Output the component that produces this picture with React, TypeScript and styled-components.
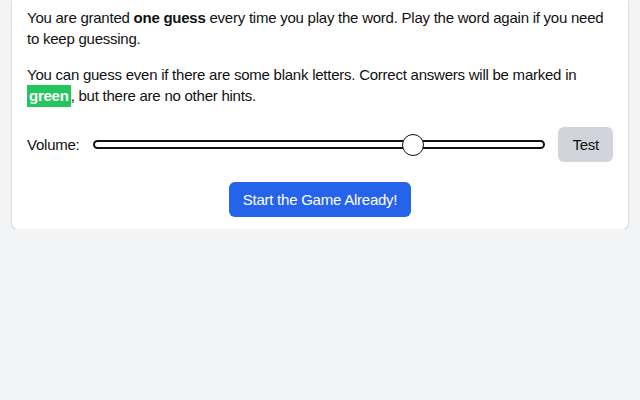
import React, { useState } from 'react';
import styled, { createGlobalStyle } from 'styled-components';

const GlobalStyle = createGlobalStyle`
  html, body {
    margin: 0;
    padding: 0;
    background: #f3f4f6;
  }
  body {
    font-family: 'Liberation Sans', Arial, sans-serif;
    font-size: 15px;
    line-height: 21px;
    letter-spacing: -0.24px;
    color: #111;
  }
`;

const Page = styled.div`
  padding: 0 12px;
`;

const Card = styled.div`
  background: #fff;
  border-radius: 0 0 6px 6px;
  box-shadow: 0 1px 3px rgba(0, 0, 0, 0.14), 0 1px 2px rgba(0, 0, 0, 0.08);
  padding: 7px 15px 12px;
`;

const Paragraph = styled.p<{ $last?: boolean }>`
  margin: 0 0 ${(p) => (p.$last ? '0' : '15px')};
`;

const Highlight = styled.span`
  background: #22c55e;
  color: #fff;
  font-weight: 600;
  padding: 2px 2px 3px;
`;

const VolumeRow = styled.div`
  display: flex;
  align-items: center;
  gap: 13px;
  margin-top: 21px;
`;

const Label = styled.label`
  flex: none;
`;

const Slider = styled.input`
  flex: 1;
  margin: 0;
  height: 24px;
  background: transparent;
  -webkit-appearance: none;
  appearance: none;

  &::-webkit-slider-runnable-track {
    height: 9px;
    box-sizing: border-box;
    background: #fff;
    border: 2px solid #111;
    border-radius: 5px;
  }

  &::-webkit-slider-thumb {
    -webkit-appearance: none;
    appearance: none;
    width: 22px;
    height: 22px;
    margin-top: -8.5px;
    box-sizing: border-box;
    border: 1.5px solid #111;
    border-radius: 50%;
    background: #fff;
  }
`;

const Button = styled.button<{ $variant: 'grey' | 'blue' }>`
  height: 35px;
  padding: 0 14px;
  border: none;
  border-radius: 6px;
  font-family: inherit;
  font-size: 15px;
  letter-spacing: -0.24px;
  cursor: pointer;
  background: ${(p) => (p.$variant === 'blue' ? '#2563eb' : '#d1d5db')};
  color: ${(p) => (p.$variant === 'blue' ? '#fff' : '#111')};
`;

const StartRow = styled.div`
  display: flex;
  justify-content: center;
  margin-top: 20px;
`;

const App: React.FC = () => {
  const [volume, setVolume] = useState(72);

  return (
    <>
      <GlobalStyle />
      <Page>
        <Card>
          <Paragraph>
            You are granted <b>one guess</b> every time you play the word. Play the word again
            if you need to keep guessing.
          </Paragraph>
          <Paragraph $last>
            You can guess even if there are some blank letters. Correct answers will be marked
            in <Highlight>green</Highlight>, but there are no other hints.
          </Paragraph>
          <VolumeRow>
            <Label htmlFor="volume">Volume:</Label>
            <Slider
              id="volume"
              type="range"
              min={0}
              max={100}
              value={volume}
              onChange={(e) => setVolume(Number(e.target.value))}
            />
            <Button $variant="grey">Test</Button>
          </VolumeRow>
          <StartRow>
            <Button $variant="blue">Start the Game Already!</Button>
          </StartRow>
        </Card>
      </Page>
    </>
  );
};

export default App;
